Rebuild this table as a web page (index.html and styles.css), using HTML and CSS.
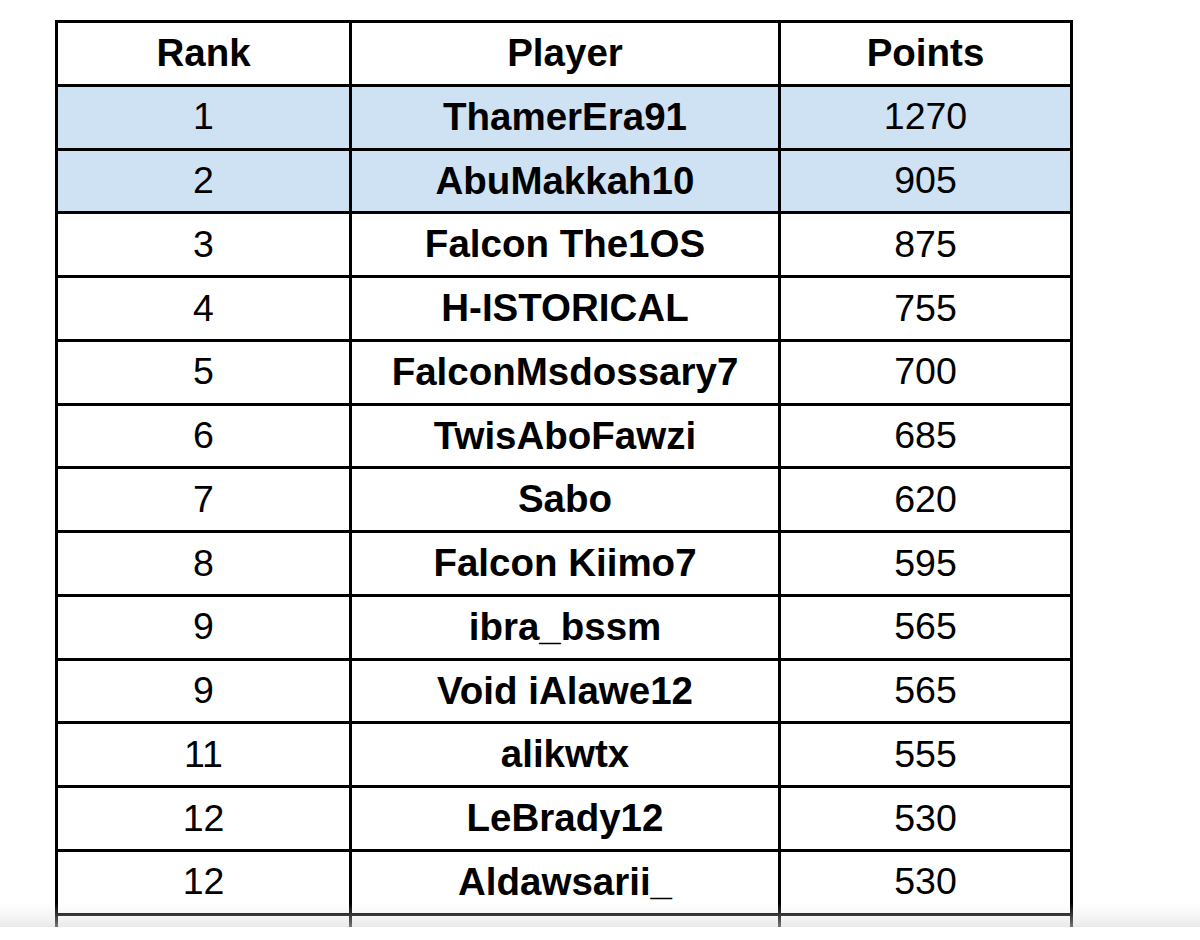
FILE: index.html
```html
<!DOCTYPE html>
<html>
<head>
<meta charset="utf-8">
<link rel="stylesheet" href="styles.css">
</head>
<body>
<div class="page">
  <table class="board">
    <colgroup><col class="c-rank"><col class="c-player"><col class="c-points"></colgroup>
    <thead>
      <tr><th>Rank</th><th>Player</th><th>Points</th></tr>
    </thead>
    <tbody>
      <tr class="hl"><td>1</td><td class="name">ThamerEra91</td><td>1270</td></tr>
      <tr class="hl"><td>2</td><td class="name">AbuMakkah10</td><td>905</td></tr>
      <tr><td>3</td><td class="name">Falcon The1OS</td><td>875</td></tr>
      <tr><td>4</td><td class="name">H-ISTORICAL</td><td>755</td></tr>
      <tr><td>5</td><td class="name">FalconMsdossary7</td><td>700</td></tr>
      <tr><td>6</td><td class="name">TwisAboFawzi</td><td>685</td></tr>
      <tr><td>7</td><td class="name">Sabo</td><td>620</td></tr>
      <tr><td>8</td><td class="name">Falcon Kiimo7</td><td>595</td></tr>
      <tr><td>9</td><td class="name">ibra_bssm</td><td>565</td></tr>
      <tr><td>9</td><td class="name">Void iAlawe12</td><td>565</td></tr>
      <tr><td>11</td><td class="name">alikwtx</td><td>555</td></tr>
      <tr><td>12</td><td class="name">LeBrady12</td><td>530</td></tr>
      <tr><td>12</td><td class="name">Aldawsarii_</td><td>530</td></tr>
      <tr><td></td><td class="name"></td><td></td></tr>
    </tbody>
  </table>
  <div class="shade"></div>
</div>
</body>
</html>
```
FILE: styles.css
```css
html, body {
  margin: 0;
  padding: 0;
  background: #ffffff;
}
.page {
  position: relative;
  height: 927px;
  overflow: hidden;
  padding: 20px 0 0 55px;
  box-sizing: border-box;
  background: #ffffff;
}
.board {
  border-collapse: collapse;
  table-layout: fixed;
  width: 1015px;
  font-family: "Liberation Sans", Arial, sans-serif;
  font-size: 37.5px;
  color: #000;
}
.c-rank { width: 294px; }
.c-player { width: 429px; }
.c-points { width: 292px; }
.board th, .board td {
  border: 3px solid #000;
  text-align: center;
  vertical-align: middle;
  padding: 0;
  height: 63.75px;
  box-sizing: border-box;
  line-height: 1;
}
.board th { font-weight: bold; font-size: 38.5px; }
.board td.name { font-weight: bold; font-size: 38.5px; }
.board tr.hl td { background: #cfe2f3; }
.shade {
  position: absolute;
  left: 0;
  right: 0;
  bottom: 0;
  height: 24px;
  background: linear-gradient(to bottom, rgba(220,220,220,0) 0%, rgba(220,220,220,0.3) 60%, rgba(215,215,215,0.55) 100%);
  pointer-events: none;
}
```
